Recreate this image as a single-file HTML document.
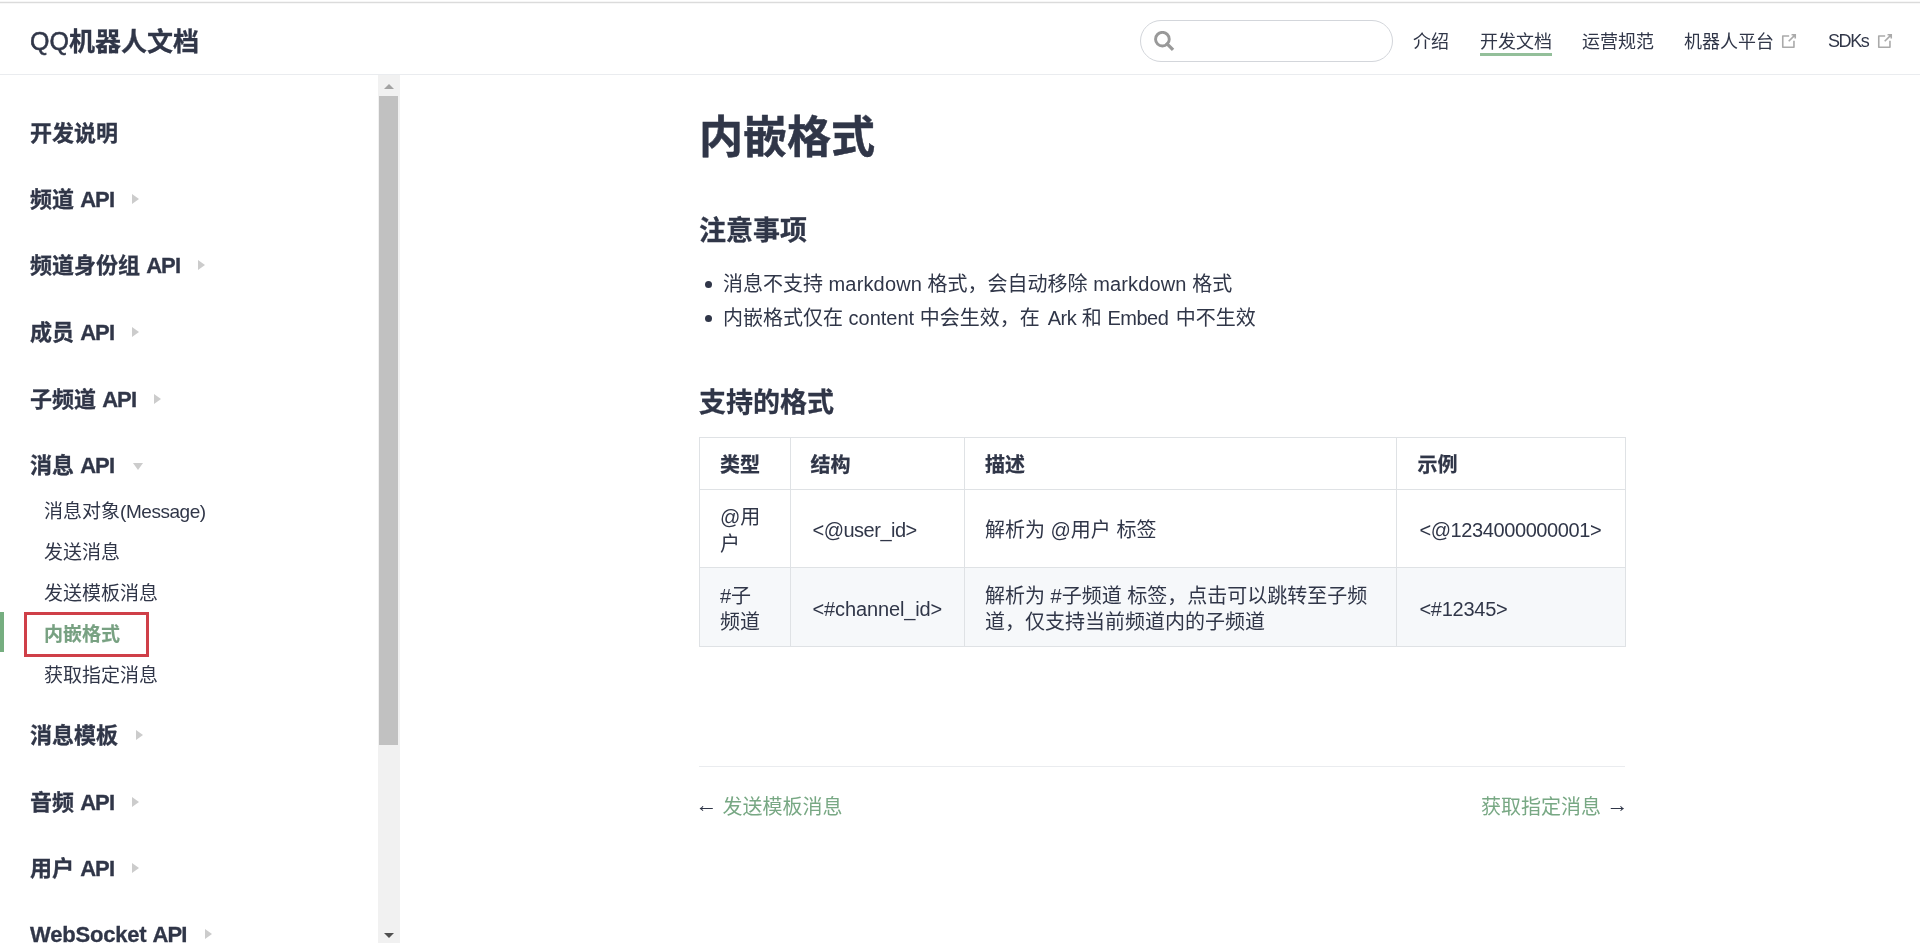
<!DOCTYPE html>
<html lang="zh-CN">
<head>
<meta charset="utf-8">
<title>内嵌格式 | QQ机器人文档</title>
<style>
*{box-sizing:border-box}
html,body{margin:0;padding:0}
body{width:1920px;height:943px;overflow:hidden;background:#fff;color:#303648;
  font-family:"Liberation Sans","Noto Sans CJK SC",sans-serif;font-size:20px;position:relative;
  -webkit-font-smoothing:antialiased}
a{text-decoration:none;color:inherit}
.topline{z-index:5;position:absolute;left:0;top:1px;width:1920px;height:3px;
  background:linear-gradient(#f6f6f6 0,#f6f6f6 1px,#dbdbdb 1px,#dbdbdb 2px,#f7f7f7 2px,#f7f7f7 3px)}
/* ---------- navbar ---------- */
.navbar,.sidebar,.page{will-change:transform}
.navbar{position:absolute;left:0;top:3px;width:1920px;height:72px;border-bottom:1px solid #eaecef;background:#fff}
.site-name{position:absolute;left:30px;top:23px;height:32px;line-height:32px;font-size:26px;font-weight:700;color:#303648;white-space:nowrap}
.site-name .lat{font-weight:400;letter-spacing:0;font-size:25px;position:relative;top:-1.5px;-webkit-text-stroke:.55px #303648}
.search{position:absolute;left:1140px;top:17px;width:253px;height:42px;border:1px solid #d3d6db;border-radius:21px;background:#fff}
.search svg{position:absolute;left:13px;top:10px;width:21px;height:21px}
.nav a{position:absolute;top:26px;height:27px;line-height:27px;font-size:18px;color:#303648;white-space:nowrap}
.nav a.active{border-bottom:3px solid #93bf9a;height:27px}
.nav svg{position:absolute;top:28px;width:20px;height:20px;color:#aaa}
/* ---------- sidebar ---------- */
.sidebar{position:absolute;left:0;top:75px;width:400px;height:868px;overflow:hidden}
.sb-head{position:absolute;left:30px;height:32px;line-height:32px;font-size:22px;font-weight:700;color:#303648;white-space:nowrap}
.sb-head .lat{letter-spacing:-.9px}
.arrow{display:inline-block;width:0;height:0;position:relative;vertical-align:middle}
.arrow.right{border-top:5px solid transparent;border-bottom:5px solid transparent;border-left:7.5px solid #ccc;left:12px;top:-2px}
.arrow.down{border-left:5px solid transparent;border-right:5px solid transparent;border-top:7.5px solid #ccc;left:13px;top:-1px}
.sb-link{position:absolute;left:44px;height:28px;line-height:28px;font-size:19px;color:#303648;white-space:nowrap}
.sb-link .lat{letter-spacing:-.45px}
.sb-link.active{color:#78a182;font-weight:700}
.sb-bar{position:absolute;left:0;top:537px;width:4px;height:40px;background:#76ae80}
.redbox{position:absolute;left:23.5px;top:537px;width:125.5px;height:45px;border:3px solid #cf3f48}
.scroll-track{position:absolute;left:378px;top:0;width:22px;height:868px;background:#f1f1f1}
.scroll-thumb{position:absolute;left:379px;top:21px;width:19px;height:649px;background:#c1c1c1}
.tri-up{position:absolute;left:384px;top:9px;width:0;height:0;border-left:5px solid transparent;border-right:5px solid transparent;border-bottom:5px solid #a3a3a3}
.tri-down{position:absolute;left:384px;top:858px;width:0;height:0;border-left:5px solid transparent;border-right:5px solid transparent;border-top:5px solid #505050}

/* ---------- page ---------- */
.page{position:absolute;left:699px;top:75px;width:926px}
.page h1{position:absolute;left:0;top:35px;margin:0;height:56px;line-height:56px;font-size:44px;font-weight:700;color:#303648;white-space:nowrap}
.page h3{position:absolute;left:0;margin:0;height:36px;line-height:36px;font-size:27px;font-weight:700;color:#303648;white-space:nowrap}
.page ul{position:absolute;left:0;top:192px;margin:0;padding:0 0 0 24px;list-style:none;line-height:34px;font-size:20px;white-space:nowrap}
.page li{position:relative;height:34px}
.page li::before{content:"";position:absolute;left:-18px;top:13.5px;width:7px;height:7px;border-radius:50%;background:#303648}
table{position:absolute;left:0;top:362px;width:926px;border-collapse:collapse;table-layout:fixed;font-size:20px;line-height:26.4px}
th,td{border:1px solid #dfe2e5;padding:14px 20px 10px;text-align:left;vertical-align:middle;font-weight:400}
th{font-weight:700}
tr.alt{background:#f6f8fa}
.page hr{position:absolute;left:0;top:691px;width:926px;height:1px;border:0;margin:0;background:#eaecef}
.pnav{position:absolute;top:715px;height:34px;line-height:34px;font-size:20px;white-space:nowrap;color:#303648}
.pnav a{color:#78a884}
.pnav .ar{display:inline-block;width:18px;text-align:left;font-size:22px;line-height:22px;position:relative;top:-2.5px}
.pnav .ar.l{left:-3.4px}
.pnav .ar.r{width:18.5px}
.page h1{-webkit-text-stroke:.5px #303648}
.page h3,.sb-head,.site-name{-webkit-text-stroke:.3px #303648}
th{-webkit-text-stroke:.25px #303648}
.sb-link.active{-webkit-text-stroke:.15px #78a182}
</style>
</head>
<body>
<div class="topline"></div>

<header class="navbar">
  <a class="site-name" href="#"><span class="lat">QQ</span>机器人文档</a>
  <div class="search">
    <svg viewBox="0 0 21 21"><circle cx="8.4" cy="8.2" r="6.85" fill="none" stroke="#999" stroke-width="2.9"/><path d="M13.3 13.1 L17.9 17.7" stroke="#999" stroke-width="3.3" stroke-linecap="square"/></svg>
  </div>
  <nav class="nav">
    <a href="#" style="left:1413px">介绍</a>
    <a href="#" class="active" style="left:1480px">开发文档</a>
    <a href="#" style="left:1582px">运营规范</a>
    <a href="#" style="left:1684px">机器人平台</a>
    <svg style="left:1779px" viewBox="0 0 100 100"><path fill="currentColor" d="M18.8,85.1h56l0,0c2.2,0,4-1.8,4-4v-32h-8v28h-48v-48h28v-8h-32l0,0c-2.2,0-4,1.800-4,4v56C14.800,83.300,16.600,85.100,18.800,85.100z"/><polygon fill="currentColor" points="45.700,48.700 51.300,54.300 77.200,28.500 77.200,37.200 85.200,37.200 85.200,14.900 62.800,14.900 62.800,22.900 71.500,22.900"/></svg>
    <a href="#" style="left:1828px;top:25px;letter-spacing:-1.4px">SDKs</a>
    <svg style="left:1875px" viewBox="0 0 100 100"><path fill="currentColor" d="M18.8,85.1h56l0,0c2.2,0,4-1.8,4-4v-32h-8v28h-48v-48h28v-8h-32l0,0c-2.2,0-4,1.800-4,4v56C14.800,83.300,16.600,85.100,18.800,85.100z"/><polygon fill="currentColor" points="45.700,48.700 51.300,54.300 77.200,28.500 77.200,37.200 85.200,37.200 85.200,14.900 62.800,14.900 62.800,22.900 71.500,22.900"/></svg>
  </nav>
</header>

<aside class="sidebar">
  <div class="sb-head" style="top:43px">开发说明</div>
  <div class="sb-head" style="top:109px">频道 <span class="lat">API</span> <span class="arrow right"></span></div>
  <div class="sb-head" style="top:175px">频道身份组 <span class="lat">API</span> <span class="arrow right"></span></div>
  <div class="sb-head" style="top:242px">成员 <span class="lat">API</span> <span class="arrow right"></span></div>
  <div class="sb-head" style="top:309px">子频道 <span class="lat">API</span> <span class="arrow right"></span></div>
  <div class="sb-head" style="top:375px">消息 <span class="lat">API</span> <span class="arrow down"></span></div>
  <a class="sb-link" href="#" style="top:423px">消息对象<span class="lat">(Message)</span></a>
  <a class="sb-link" href="#" style="top:464px">发送消息</a>
  <a class="sb-link" href="#" style="top:505px">发送模板消息</a>
  <div class="sb-bar"></div>
  <a class="sb-link active" href="#" style="top:546px">内嵌格式</a>
  <div class="redbox"></div>
  <a class="sb-link" href="#" style="top:587px">获取指定消息</a>
  <div class="sb-head" style="top:645px">消息模板 <span class="arrow right"></span></div>
  <div class="sb-head" style="top:712px">音频 <span class="lat">API</span> <span class="arrow right"></span></div>
  <div class="sb-head" style="top:778px">用户 <span class="lat">API</span> <span class="arrow right"></span></div>
  <div class="sb-head" style="top:844px"><span style="letter-spacing:-.2px">WebSocket</span> <span class="lat">API</span> <span class="arrow right"></span></div>
  <div class="scroll-track"></div>
  <div class="scroll-thumb"></div>
  <div class="tri-up"></div>
  <div class="tri-down"></div>
</aside>

<main class="page">
  <h1>内嵌格式</h1>
  <h3 style="top:138px">注意事项</h3>
  <ul>
    <li>消息不支持 <span style="letter-spacing:.15px">markdown</span> 格式，会自动移除 <span style="letter-spacing:.15px">markdown</span> 格式</li>
    <li>内嵌格式仅在 content 中会生效，在 <span style="letter-spacing:-.5px;padding-left:2.5px">Ark</span> 和 <span style="letter-spacing:-.5px;padding-right:2px">Embed</span> 中不生效</li>
  </ul>
  <h3 style="top:310px">支持的格式</h3>
  <table>
    <colgroup><col style="width:90.5px"><col style="width:174.5px"><col style="width:432.4px"><col style="width:228.6px"></colgroup>
    <thead><tr style="height:52px"><th>类型</th><th>结构</th><th>描述</th><th>示例</th></tr></thead>
    <tbody>
      <tr style="height:78px"><td>@用<br>户</td><td><span style="padding-left:2px;letter-spacing:-.5px">&lt;@user_id&gt;</span></td><td>解析为 @用户 标签</td><td><span style="padding-left:2px;letter-spacing:-.4px">&lt;@1234000000001&gt;</span></td></tr>
      <tr class="alt" style="height:79px"><td>#子<br>频道</td><td><span style="padding-left:2px;letter-spacing:-.13px">&lt;#channel_id&gt;</span></td><td>解析为 #子频道 标签，点击可以跳转至子频<br>道，仅支持当前频道内的子频道</td><td><span style="padding-left:2px;letter-spacing:-.25px">&lt;#12345&gt;</span></td></tr>
    </tbody>
  </table>
  <hr>
  <div class="pnav" style="left:0"><span class="ar l">←</span> <a href="#">发送模板消息</a></div>
  <div class="pnav" style="right:0"><a href="#">获取指定消息</a> <span class="ar r">→</span></div>
</main>
</body>
</html>
